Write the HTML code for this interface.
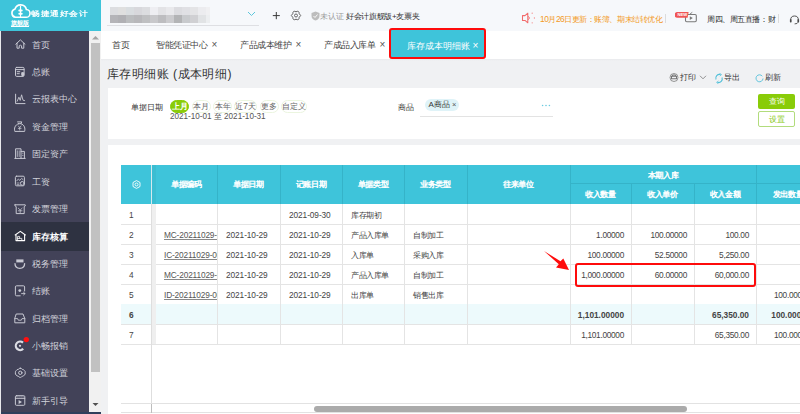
<!DOCTYPE html>
<html><head><meta charset="utf-8">
<style>
*{margin:0;padding:0;box-sizing:border-box}
html,body{width:800px;height:414px;overflow:hidden}
body{position:relative;background:#f0f1f3;font-family:"Liberation Sans",sans-serif;color:#333}
.a{position:absolute}
.nw{white-space:nowrap}
#logo{left:0;top:0;width:101px;height:31px;background:#3ec4da}
#side{left:0;top:31px;width:89px;height:383px;background:#424258;border-left:1px solid #e8e8ec;overflow:hidden}
.mi{position:absolute;left:0;width:88px;height:27.4px;color:#d2d3db;font-size:9px;line-height:27.4px}
.mi span{position:absolute;left:30.8px;top:0.5px}
.mi svg{position:absolute;left:14px;top:8.7px}
.mi.sel{background:#2e3241;color:#fff;font-weight:bold}
#vs{left:89px;top:31px;width:12px;height:381px;background:#f1f1f1}
#vthumb{left:91px;top:43px;width:9px;height:329px;background:#c1c1c1}
#hdr{left:101px;top:0;width:699px;height:31px;background:#f6f8fb}
#tabs{left:101px;top:31px;width:699px;height:28px;background:#fff;border-bottom:1px solid #fff}
#tabshadow{left:101px;top:59px;width:699px;height:2px;background:linear-gradient(#e9eaed,#f0f1f3)}
.tab{position:absolute;top:0;height:27px;line-height:28px;font-size:9px;letter-spacing:-0.5px;color:#444;white-space:nowrap}
.panel{background:#fff}
.hl{font-size:8.6px;color:#333;white-space:nowrap}
.pill{position:absolute;top:100px;height:13px;border-radius:7px;border:1px solid #ebf5df;font-size:8.4px;line-height:11.5px;text-align:center;color:#666;white-space:nowrap}
.th{color:#fff;font-weight:bold;text-shadow:0.3px 0 0 rgba(255,255,255,0.55);font-size:8.2px;letter-spacing:-0.4px;text-align:center;white-space:nowrap;overflow:hidden}
.td{height:20px;line-height:22px;font-size:8.3px;color:#444;white-space:nowrap}
</style></head>
<body>
<!-- LOGO -->
<div id="logo" class="a">
  <svg class="a" style="left:10px;top:4px" width="21" height="15" viewBox="0 0 21 15">
    <path d="M5.5 13.3 H15.8 a3.9 3.9 0 0 0 0.6 -7.8 a5.9 5.9 0 0 0 -11.4 -0.4 a4.2 4.2 0 0 0 0.5 8.2z" fill="none" stroke="#fff" stroke-width="1.6"/>
    <path d="M10.5 2 V13.5" stroke="#fff" stroke-width="1.2"/>
    <rect x="8.3" y="5.5" width="4.4" height="2" rx="1" fill="#fff"/>
    <rect x="8.3" y="8.7" width="4.4" height="2" rx="1" fill="#fff"/>
  </svg>
  <div class="a nw" style="left:31px;top:7.5px;font-size:9px;line-height:11px;color:#fff;letter-spacing:0.55px;font-weight:bold;transform:scaleY(0.8);transform-origin:0 50%">畅捷通好会计</div>
  <div class="a nw" style="left:11px;top:19px;font-size:6.3px;line-height:8px;color:#fff;font-weight:bold;text-decoration:underline">旗舰版</div>
</div>
<!-- SIDEBAR -->
<div id="side" class="a">
  <div class="mi" style="top:0"><span>首页</span></div>
  <div class="mi" style="top:27.4px"><span>总账</span></div>
  <div class="mi" style="top:54.8px"><span>云报表中心</span></div>
  <div class="mi" style="top:82.2px"><span>资金管理</span></div>
  <div class="mi" style="top:109.6px"><span>固定资产</span></div>
  <div class="mi" style="top:137px"><span>工资</span></div>
  <div class="mi" style="top:164.4px"><span>发票管理</span></div>
  <div class="mi sel" style="top:191.2px;height:28.4px;line-height:28.4px"><span>库存核算</span></div>
  <div class="mi" style="top:219.2px"><span>税务管理</span></div>
  <div class="mi" style="top:246.6px"><span>结账</span></div>
  <div class="mi" style="top:274px"><span>归档管理</span></div>
  <div class="mi" style="top:301.4px"><span>小畅报销</span></div>
  <div class="mi" style="top:328.8px"><span>基础设置</span></div>
  <div class="mi" style="top:356.2px"><span>新手引导</span></div>
</div>
<svg class="a" style="left:0;top:0" width="89" height="414" viewBox="0 0 89 414" fill="none" stroke="#c8c9d3" stroke-width="1" stroke-linejoin="round" stroke-linecap="round">
<path d="M15.8 44.2 L20.4 39.9 L25 44.2 M17 43.2 V48.2 H19.2 V45.8 Q20.4 44.6 21.6 45.8 V48.2 H23.8 V43.2"/>
<rect x="15.5" y="67.4" width="8.6" height="9" rx="1.2"/><path d="M15.5 69.6 H24.1 M17.2 71.7 H19.8 M17.2 73.7 H19.3"/><path d="M21.2 72.6 L22.7 72 L24.2 72.6 V74.6 Q24.2 76.2 22.7 76.8 Q21.2 76.2 21.2 74.6z" fill="#c8c9d3" stroke="none"/>
<path d="M15.6 94.2 V103.6 H25"/><path d="M17.2 101.2 L18.9 97.2 L20.2 100.4 L21.6 94.8 L23 100.2 L24.6 100.6" stroke-width="0.9"/>
<path d="M17.6 121.9 H21.8 L20.8 123.7 M18.6 123.7 H20.8 C24.6 124.8 25.4 128.5 24.6 131.4 H14.8 C14 128.5 14.8 124.8 18.6 123.7z"/><path d="M18.4 126 L19.7 127.6 L21 126 M19.7 127.6 V130 M18.3 128.4 H21.1" stroke-width="0.75"/>
<path d="M15.6 158.4 V148.8 H21 V158.4 M21 151.4 H24.4 V158.4 M14.8 158.4 H25.2"/><path d="M17.3 150.8 V156.5 M19.2 150.8 V156.5 M22.6 153.2 H23 M22.6 155.4 H23" stroke-width="0.8"/>
<rect x="15.4" y="176.2" width="9" height="9.6" rx="1.2"/><path d="M16.8 180.8 L18.4 179 L19.8 180.4 L21.6 178.4 L23 179.6" stroke-width="0.85"/><circle cx="22.3" cy="183.4" r="1.9" fill="#424258"/><path d="M17 183 H19 M17 184.6 H19" stroke-width="0.7"/>
<path d="M15 204.8 H25.2 Q26 206 24.2 206.6 V213.6 H16.2 V206.6 Q14.2 206 15 204.8z"/><path d="M18.3 208.2 L20.2 210 L22.1 208.2 M20.2 210 V212.6 M18.4 210.8 H22" stroke-width="0.75"/>
<path d="M15.2 235 L20.3 231.4 L25.4 235 M16 234.6 V240.6 H24.6 V234.6" stroke="#fff" stroke-width="1.1"/><path d="M17.6 240.6 V236.4 H19.6 V238.4 H21.8 V240.6 M17.6 238.4 H19.6" stroke="#fff" stroke-width="0.8"/>
<path d="M16.3 259.4 H23.5 V262.4 H16.3z" fill="#c8c9d3" stroke="none"/><path d="M15 263.6 Q15 268.4 19.8 268.4 Q24.6 268.4 24.6 263.6" stroke-width="1.3"/>
<path d="M24.6 291 V287 Q24.6 285.8 23.4 285.8 H16.6 Q15.4 285.8 15.4 287 V294.6 Q15.4 295.8 16.6 295.8 H20.2"/><circle cx="19.8" cy="290.6" r="1.4" fill="#c8c9d3" stroke="none"/><path d="M21.6 293.6 H25 M23.6 292.3 L25 293.6 L23.6 294.9" stroke-width="0.9"/>
<path d="M16.6 314 H23 L24.8 318.6 V322.8 H14.8 V318.6z"/><path d="M14.8 318.6 H17.6 L18.3 320.2 H21.3 L22 318.6 H24.8" stroke-width="0.9"/>
<path d="M23 342.6 A4.3 4.3 0 1 0 23.2 348.8" stroke="#dcdde4" stroke-width="2.2" stroke-linecap="butt"/><circle cx="20" cy="345.8" r="1.1" fill="#dcdde4" stroke="none"/>
<circle cx="26.3" cy="339.6" r="2.7" fill="#ff1010" stroke="none"/>
<path d="M20.3 368.2 Q21.6 368.2 22.3 369.4 Q23.7 369.3 24.4 370.6 Q25.6 371.6 25.2 372.8 Q25.6 374.1 24.4 375 Q23.7 376.3 22.3 376.2 Q21.6 377.4 20.3 377.4 Q19 377.4 18.3 376.2 Q16.9 376.3 16.2 375 Q15 374.1 15.4 372.8 Q15 371.6 16.2 370.6 Q16.9 369.3 18.3 369.4 Q19 368.2 20.3 368.2z"/><circle cx="20.3" cy="372.8" r="1.7"/>
<rect x="15.4" y="395.7" width="9.4" height="9.6" rx="1"/><path d="M15.4 398.4 H24.8" stroke-width="0.9"/><path d="M17 396.9 H17.2 M19 396.9 H19.2 M21 396.9 H21.2 M23 396.9 H23.2" stroke-width="0.8"/><path d="M18.6 400 V404 L22 402z" fill="#c8c9d3" stroke="none"/>
</svg>
<div id="vs" class="a"></div>
<div id="vthumb" class="a"></div>
<svg class="a" style="left:91px;top:34px" width="9" height="8" viewBox="0 0 9 8"><path d="M1 5.5 L4.5 2 L8 5.5z" fill="#a3a3a3"/></svg>
<svg class="a" style="left:91px;top:401px" width="9" height="8" viewBox="0 0 9 8"><path d="M1.5 2 L4.5 5 L7.5 2z" fill="#505050"/></svg>
<div class="a" style="left:1px;top:412px;width:100px;height:2px;background:#2f3f5c"></div>
<!-- HEADER -->
<div id="hdr" class="a">
  <div class="a" style="left:9px;top:7px;width:100px;height:16px;overflow:hidden;filter:blur(0.6px)">
    <svg width="100" height="16" viewBox="0 0 100 16" shape-rendering="crispEdges">
      <rect x="0" y="0" width="8" height="8" fill="#dcdde0"/><rect x="8" y="0" width="8" height="8" fill="#dfdfdf"/><rect x="16" y="0" width="8" height="8" fill="#d9dde0"/><rect x="24" y="0" width="8" height="8" fill="#d8d8dc"/><rect x="32" y="0" width="8" height="8" fill="#dcdde0"/><rect x="40" y="0" width="8" height="8" fill="#eeeef2"/><rect x="48" y="0" width="8" height="8" fill="#e3e3e6"/><rect x="56" y="0" width="8" height="8" fill="#e9e9ec"/><rect x="64" y="0" width="8" height="8" fill="#dcdce0"/><rect x="72" y="0" width="8" height="8" fill="#e0e0e4"/><rect x="80" y="0" width="8" height="8" fill="#e4e4e6"/><rect x="88" y="0" width="8" height="8" fill="#ececef"/><rect x="96" y="0" width="4" height="8" fill="#f0f0f2"/>
      <rect x="0" y="8" width="8" height="8" fill="#b4b4b8"/><rect x="8" y="8" width="8" height="8" fill="#b0b0b4"/><rect x="16" y="8" width="8" height="8" fill="#bbbdbf"/><rect x="24" y="8" width="8" height="8" fill="#b8b8bb"/><rect x="32" y="8" width="8" height="8" fill="#bfc0c2"/><rect x="40" y="8" width="8" height="8" fill="#c8c8cb"/><rect x="48" y="8" width="8" height="8" fill="#bdbdc0"/><rect x="56" y="8" width="8" height="8" fill="#cbcbce"/><rect x="64" y="8" width="8" height="8" fill="#b3b4b6"/><rect x="72" y="8" width="8" height="8" fill="#c8cacd"/><rect x="80" y="8" width="8" height="8" fill="#d0d0d3"/><rect x="88" y="8" width="8" height="8" fill="#e1e3e5"/><rect x="96" y="8" width="4" height="8" fill="#eceef0"/>
    </svg>
  </div>
  <div class="a" style="left:6px;top:25px;width:152px;height:1px;background:#dedfe3"></div>
  <svg class="a" style="left:146px;top:11px" width="9" height="6" viewBox="0 0 9 6"><path d="M1 1 L4.5 4.5 L8 1" fill="none" stroke="#5cc6dc" stroke-width="1"/></svg>
  <svg class="a" style="left:170.5px;top:10.5px" width="9" height="9" viewBox="0 0 9 9"><path d="M4.3 1V8.2M0.8 4.6H7.8" stroke="#3a3a3a" stroke-width="1"/></svg>
  <svg class="a" style="left:188.5px;top:9.5px" width="12" height="11" viewBox="0 0 12 11"><path d="M9.20 3.65 Q9.10 0.13 6.00 1.80 Q2.90 0.13 2.80 3.65 Q-0.20 5.50 2.80 7.35 Q2.90 10.87 6.00 9.20 Q9.10 10.87 9.20 7.35 Q12.20 5.50 9.20 3.65 z" fill="none" stroke="#5a5a5a" stroke-width="0.95"/><circle cx="6" cy="5.5" r="1.5" fill="none" stroke="#5a5a5a" stroke-width="0.9"/></svg>
  <svg class="a" style="left:210px;top:11px" width="9" height="10" viewBox="0 0 9 10"><path d="M4.5 0.5 L8.5 2 V5 C8.5 7.5 6.5 9 4.5 9.5 C2.5 9 0.5 7.5 0.5 5 V2z" fill="#bdbdbd"/><path d="M2.5 5 L4 6.5 L6.5 3.5" fill="none" stroke="#fff" stroke-width="0.9"/></svg>
  <div class="a nw" style="left:219px;top:10.5px;font-size:8.4px;line-height:11px;color:#9a9a9a">未认证</div>
  <div class="a nw" style="left:245px;top:10.5px;font-size:8.1px;letter-spacing:-0.33px;line-height:11px;color:#333">好会计旗舰版+友票夹</div>
  <svg class="a" style="left:420px;top:11px" width="15" height="14" viewBox="0 0 15 14"><path d="M1.5 4.6 H4 L6.8 2.2 V11.8 L4 9.4 H1.5z" fill="none" stroke="#f26b6b" stroke-width="1.05" stroke-linejoin="round"/><path d="M7.4 5.3 Q9.4 7 7.4 8.7" fill="none" stroke="#f26b6b" stroke-width="1"/><circle cx="11.2" cy="2.2" r="0.65" fill="#f58a8a"/><circle cx="13.4" cy="7" r="0.65" fill="#f58a8a"/><circle cx="11.2" cy="11.8" r="0.65" fill="#f58a8a"/></svg>
  <div class="a nw" style="left:439px;top:14px;font-size:8.4px;letter-spacing:-0.47px;line-height:11px;color:#f39a1e">10月26日更新：账簿、期末结转优化</div>
  <div class="a" style="left:564px;top:14px;width:1px;height:9px;background:#dcdcdc"></div>
  <svg class="a" style="left:574px;top:11px" width="23" height="13" viewBox="0 0 23 13"><rect x="10.5" y="3.5" width="10.8" height="7.2" rx="1.2" fill="none" stroke="#7a7a7a" stroke-width="1.1"/><path d="M15 3 L17.3 1.3" fill="none" stroke="#7a7a7a" stroke-width="0.9"/><path d="M14.8 5.3 V8.9 L17.8 7.1z" fill="#7a7a7a"/><path d="M2.5 1 H13.6 L12.6 6.8 H2.5 A2.9 2.9 0 0 1 2.5 1z" fill="#f05555"/><text x="7.4" y="5.4" font-size="4.2" fill="#fff" text-anchor="middle" font-family="Liberation Sans" font-weight="bold">NEW</text></svg>
  <div class="a nw" style="left:606px;top:14px;font-size:8.4px;letter-spacing:-0.42px;line-height:11px;color:#333">周四、周五直播：财</div>
  <div class="a" style="left:677px;top:14px;width:1px;height:9px;background:#dcdcdc"></div>
  <svg class="a" style="left:687.5px;top:13.5px" width="11" height="11" viewBox="0 0 11 11"><path d="M1.6 6.2 A3.9 4.2 0 0 1 9.4 6.2" fill="none" stroke="#4a4a4a" stroke-width="0.95"/><rect x="0.9" y="5.2" width="1.7" height="3.2" rx="0.6" fill="#4a4a4a"/><rect x="8.4" y="5.2" width="1.7" height="3.2" rx="0.6" fill="#4a4a4a"/><path d="M9 8.3 Q8.6 9.9 5.6 9.9" fill="none" stroke="#4a4a4a" stroke-width="0.9"/></svg>
</div>
<!-- TABS -->
<div id="tabshadow" class="a"></div>
<div id="tabs" class="a">
  <div class="tab" style="left:11px">首页</div>
  <div class="tab" style="left:55px">智能凭证中心 <span style="font-size:10px;font-weight:lighter;color:#555;margin-left:2.5px;letter-spacing:0">×</span></div>
  <div class="tab" style="left:139px">产品成本维护 <span style="font-size:10px;font-weight:lighter;color:#555;margin-left:2.5px;letter-spacing:0">×</span></div>
  <div class="tab" style="left:223px">产成品入库单 <span style="font-size:10px;font-weight:lighter;color:#555;margin-left:2.5px;letter-spacing:0">×</span></div>
</div>
<div class="a" style="left:389px;top:28px;width:97px;height:31px;border:2px solid #fe0b0b;border-radius:3px;background:#3ec4da"></div>
<div class="a nw" style="left:407px;top:40px;font-size:8.6px;line-height:11px;color:#fff">库存成本明细账 <span style="font-size:10px">×</span></div>
<!-- TITLE -->
<div class="a nw" style="left:107px;top:66.5px;font-size:12.2px;line-height:15px;color:#333;letter-spacing:0.45px">库存明细账 (成本明细)</div>
<!-- TOOLBAR -->
<svg class="a" style="left:669px;top:73px" width="10" height="9" viewBox="0 0 10 9"><circle cx="5" cy="4.5" r="4" fill="none" stroke="#8a8a8a" stroke-width="0.9"/><rect x="2.6" y="3.2" width="4.8" height="2.6" fill="none" stroke="#555" stroke-width="0.8"/><path d="M3.6 3.2V2H6.4V3.2" fill="none" stroke="#555" stroke-width="0.7"/></svg>
<div class="a nw" style="left:680px;top:72px;font-size:8.4px;line-height:11px;color:#333">打印</div>
<svg class="a" style="left:699px;top:75px" width="8" height="5" viewBox="0 0 8 5"><path d="M1 0.8 L4 3.8 L7 0.8" fill="none" stroke="#777" stroke-width="0.8"/></svg>
<svg class="a" style="left:714px;top:72.5px" width="10" height="11" viewBox="0 0 10 11"><path d="M6.5 1.5 A3.8 3.8 0 0 0 2 6.5" fill="none" stroke="#52c0d9" stroke-width="1.1"/><path d="M3.5 9.5 A3.8 3.8 0 0 0 8 4.5" fill="none" stroke="#52c0d9" stroke-width="1.1"/><path d="M5.5 0.3 L7.5 1.6 L5.8 3" fill="none" stroke="#52c0d9" stroke-width="0.8"/><path d="M4.5 8 L2.6 9.4 L4.2 10.7" fill="none" stroke="#52c0d9" stroke-width="0.8"/></svg>
<div class="a nw" style="left:724px;top:72px;font-size:8.4px;line-height:11px;color:#333">导出</div>
<svg class="a" style="left:754.5px;top:73.5px" width="9" height="9" viewBox="0 0 9 9"><path d="M7.3 2.2 A3.5 3.5 0 1 0 8 4.5" fill="none" stroke="#52c0d9" stroke-width="0.9"/></svg>
<div class="a nw" style="left:765px;top:72px;font-size:8.4px;line-height:11px;color:#333">刷新</div>
<!-- PANEL 1 -->
<div class="a panel" style="left:107.5px;top:88px;width:693px;height:51px"></div>
<div class="a hl" style="left:131px;top:101.5px;line-height:11px;font-size:8.1px">单据日期</div>
<div class="pill" style="left:170px;width:19px;background:#89cc08;border-color:#89cc08;color:#fff;font-weight:bold">上月</div>
<div class="pill" style="left:191.5px;width:19.5px">本月</div>
<div class="pill" style="left:213px;width:19px">本年</div>
<div class="pill" style="left:234px;width:23px">近7天</div>
<div class="pill" style="left:259.5px;width:19.5px">更多</div>
<div class="pill" style="left:281px;width:26px">自定义</div>
<div class="a hl" style="left:170px;top:111px;line-height:11px;color:#555;font-size:8.15px">2021-10-01 至 2021-10-31</div>
<div class="a hl" style="left:397.5px;top:101.5px;line-height:11px;font-size:8px">商品</div>
<div class="a nw" style="left:425px;top:99px;width:34px;height:12px;border-radius:6px;background:#dff3f8;font-size:8px;line-height:12px;color:#333;padding-left:3.5px">A商品 <span style="font-size:7.5px;color:#555">×</span></div>
<div class="a" style="left:420px;top:116px;width:133px;height:1px;background:#e3e3e3"></div>
<svg class="a" style="left:541px;top:104px" width="10" height="3" viewBox="0 0 10 3"><circle cx="1.6" cy="1.5" r="0.8" fill="#6ccbe0"/><circle cx="5" cy="1.5" r="0.8" fill="#6ccbe0"/><circle cx="8.4" cy="1.5" r="0.8" fill="#6ccbe0"/></svg>
<div class="a nw" style="left:758px;top:94px;width:37px;height:14.5px;border-radius:2px;background:#89cc08;color:#fff;font-size:8.4px;line-height:14.5px;text-align:center">查询</div>
<div class="a nw" style="left:758px;top:111px;width:37px;height:16px;border-radius:2px;border:1px solid #b2dc7c;background:#fff;color:#84c80f;font-size:8.4px;line-height:14px;text-align:center">设置</div>
<!-- PANEL 2 -->
<div class="a panel" style="left:107.5px;top:145px;width:693px;height:269px"></div>
<!-- TABLE -->
<div class="a" style="left:121px;top:165px;width:679px;height:39px;background:#3ec4da"></div>
<svg class="a" style="left:131.5px;top:179.5px" width="9" height="9" viewBox="0 0 9 9"><path d="M4.5 0.6 L8 2.5 V6.5 L4.5 8.4 L1 6.5 V2.5z" fill="none" stroke="#fff" stroke-width="0.9"/><circle cx="4.5" cy="4.5" r="1.5" fill="none" stroke="#fff" stroke-width="0.9"/></svg>
<div class="a" style="left:151px;top:165px;width:1px;height:39px;background:#d6e9ee"></div>
<div class="a" style="left:152px;top:165px;width:4px;height:39px;background:#3bbdd2"></div>
<div class="a" style="left:217px;top:165px;width:1px;height:39px;background:#35b3c8"></div>
<div class="a" style="left:280px;top:165px;width:1px;height:39px;background:#35b3c8"></div>
<div class="a" style="left:342px;top:165px;width:1px;height:39px;background:#35b3c8"></div>
<div class="a" style="left:404px;top:165px;width:1px;height:39px;background:#35b3c8"></div>
<div class="a" style="left:467px;top:165px;width:1px;height:39px;background:#35b3c8"></div>
<div class="a" style="left:570px;top:165px;width:1px;height:39px;background:#35b3c8"></div>
<div class="a" style="left:756px;top:165px;width:1px;height:39px;background:#35b3c8"></div>
<div class="a" style="left:631px;top:183px;width:1px;height:21px;background:#35b3c8"></div>
<div class="a" style="left:694px;top:183px;width:1px;height:21px;background:#35b3c8"></div>
<div class="a" style="left:570px;top:183px;width:230px;height:1px;background:#35b3c8"></div>
<div class="a th" style="left:156px;top:165px;width:61px;height:39px;line-height:39px">单据编码</div>
<div class="a th" style="left:217px;top:165px;width:63px;height:39px;line-height:39px">单据日期</div>
<div class="a th" style="left:280px;top:165px;width:62px;height:39px;line-height:39px">记账日期</div>
<div class="a th" style="left:342px;top:165px;width:62px;height:39px;line-height:39px">单据类型</div>
<div class="a th" style="left:404px;top:165px;width:63px;height:39px;line-height:39px">业务类型</div>
<div class="a th" style="left:467px;top:165px;width:103px;height:39px;line-height:39px">往来单位</div>
<div class="a th" style="left:570px;top:168px;width:186px;height:15px;line-height:15px">本期入库</div>
<div class="a th" style="left:756px;top:168px;width:124px;height:15px;line-height:15px">本期发出</div>
<div class="a th" style="left:570px;top:184.5px;width:61px;height:20.0px;line-height:20.0px">收入数量</div>
<div class="a th" style="left:631px;top:184.5px;width:63px;height:20.0px;line-height:20.0px">收入单价</div>
<div class="a th" style="left:694px;top:184.5px;width:62px;height:20.0px;line-height:20.0px">收入金额</div>
<div class="a th" style="left:756px;top:184.5px;width:64px;height:20.0px;line-height:20.0px">发出数量</div>
<div class="a" style="left:121px;top:224px;width:679px;height:1px;background:#e4e4e4"></div>
<div class="a td" style="left:129px;top:204px;">1</div>
<div class="a td" style="left:289px;top:204px;letter-spacing:-0.08px">2021-09-30</div>
<div class="a td" style="left:351px;top:204px;letter-spacing:-0.4px">库存期初</div>
<div class="a" style="left:121px;top:244px;width:679px;height:1px;background:#e4e4e4"></div>
<div class="a td" style="left:129px;top:224px;">2</div>
<div class="a td" style="left:156px;top:224px;width:61px;overflow:hidden;padding-left:8px"><span style="text-decoration:underline;text-decoration-color:#888;color:#555;letter-spacing:-0.15px">MC-20211029-0001</span></div>
<div class="a td" style="left:226px;top:224px;letter-spacing:-0.08px">2021-10-29</div>
<div class="a td" style="left:289px;top:224px;letter-spacing:-0.08px">2021-10-29</div>
<div class="a td" style="left:351px;top:224px;letter-spacing:-0.4px">产品入库单</div>
<div class="a td" style="left:413px;top:224px;letter-spacing:-0.4px">自制加工</div>
<div class="a td" style="left:570px;top:224px;width:61px;text-align:right;padding-right:7px;letter-spacing:-0.3px;">1.00000</div>
<div class="a td" style="left:631px;top:224px;width:63px;text-align:right;padding-right:7px;letter-spacing:-0.3px;">100.00000</div>
<div class="a td" style="left:694px;top:224px;width:62px;text-align:right;padding-right:7px;letter-spacing:-0.3px;">100.00</div>
<div class="a" style="left:121px;top:264px;width:679px;height:1px;background:#e4e4e4"></div>
<div class="a td" style="left:129px;top:244px;">3</div>
<div class="a td" style="left:156px;top:244px;width:61px;overflow:hidden;padding-left:8px"><span style="text-decoration:underline;text-decoration-color:#888;color:#555;letter-spacing:-0.15px">IC-20211029-0001</span></div>
<div class="a td" style="left:226px;top:244px;letter-spacing:-0.08px">2021-10-29</div>
<div class="a td" style="left:289px;top:244px;letter-spacing:-0.08px">2021-10-29</div>
<div class="a td" style="left:351px;top:244px;letter-spacing:-0.4px">入库单</div>
<div class="a td" style="left:413px;top:244px;letter-spacing:-0.4px">采购入库</div>
<div class="a td" style="left:570px;top:244px;width:61px;text-align:right;padding-right:7px;letter-spacing:-0.3px;">100.00000</div>
<div class="a td" style="left:631px;top:244px;width:63px;text-align:right;padding-right:7px;letter-spacing:-0.3px;">52.50000</div>
<div class="a td" style="left:694px;top:244px;width:62px;text-align:right;padding-right:7px;letter-spacing:-0.3px;">5,250.00</div>
<div class="a" style="left:121px;top:284px;width:679px;height:1px;background:#e4e4e4"></div>
<div class="a td" style="left:129px;top:264px;">4</div>
<div class="a td" style="left:156px;top:264px;width:61px;overflow:hidden;padding-left:8px"><span style="text-decoration:underline;text-decoration-color:#888;color:#555;letter-spacing:-0.15px">MC-20211029-0002</span></div>
<div class="a td" style="left:226px;top:264px;letter-spacing:-0.08px">2021-10-29</div>
<div class="a td" style="left:289px;top:264px;letter-spacing:-0.08px">2021-10-29</div>
<div class="a td" style="left:351px;top:264px;letter-spacing:-0.4px">产品入库单</div>
<div class="a td" style="left:413px;top:264px;letter-spacing:-0.4px">自制加工</div>
<div class="a td" style="left:570px;top:264px;width:61px;text-align:right;padding-right:7px;letter-spacing:-0.3px;">1,000.00000</div>
<div class="a td" style="left:631px;top:264px;width:63px;text-align:right;padding-right:7px;letter-spacing:-0.3px;">60.00000</div>
<div class="a td" style="left:694px;top:264px;width:62px;text-align:right;padding-right:7px;letter-spacing:-0.3px;">60,000.00</div>
<div class="a" style="left:121px;top:304px;width:679px;height:1px;background:#e4e4e4"></div>
<div class="a td" style="left:129px;top:284px;">5</div>
<div class="a td" style="left:156px;top:284px;width:61px;overflow:hidden;padding-left:8px"><span style="text-decoration:underline;text-decoration-color:#888;color:#555;letter-spacing:-0.15px">ID-20211029-0001</span></div>
<div class="a td" style="left:226px;top:284px;letter-spacing:-0.08px">2021-10-29</div>
<div class="a td" style="left:289px;top:284px;letter-spacing:-0.08px">2021-10-29</div>
<div class="a td" style="left:351px;top:284px;letter-spacing:-0.4px">出库单</div>
<div class="a td" style="left:413px;top:284px;letter-spacing:-0.4px">销售出库</div>
<div class="a td" style="left:756px;top:284px;width:64px;text-align:right;padding-right:9.5px;letter-spacing:-0.3px;">100.00000</div>
<div class="a" style="left:121px;top:304px;width:679px;height:20px;background:#edfafc"></div>
<div class="a" style="left:121px;top:324px;width:679px;height:1px;background:#e4e4e4"></div>
<div class="a td" style="left:129px;top:304px; font-weight:bold;">6</div>
<div class="a td" style="left:570px;top:304px;width:61px;text-align:right;padding-right:7px;letter-spacing:0; font-weight:bold;">1,101.00000</div>
<div class="a td" style="left:694px;top:304px;width:62px;text-align:right;padding-right:7px;letter-spacing:0; font-weight:bold;">65,350.00</div>
<div class="a td" style="left:756px;top:304px;width:64px;text-align:right;padding-right:9.5px;letter-spacing:0; font-weight:bold;">100.00000</div>
<div class="a" style="left:121px;top:344px;width:679px;height:1px;background:#e4e4e4"></div>
<div class="a td" style="left:129px;top:324px;">7</div>
<div class="a td" style="left:570px;top:324px;width:61px;text-align:right;padding-right:7px;letter-spacing:-0.3px;">1,101.00000</div>
<div class="a td" style="left:694px;top:324px;width:62px;text-align:right;padding-right:7px;letter-spacing:-0.3px;">65,350.00</div>
<div class="a td" style="left:756px;top:324px;width:64px;text-align:right;padding-right:9.5px;letter-spacing:-0.3px;">100.00000</div>
<div class="a" style="left:217px;top:204px;width:1px;height:141px;background:#e4e4e4"></div>
<div class="a" style="left:280px;top:204px;width:1px;height:141px;background:#e4e4e4"></div>
<div class="a" style="left:342px;top:204px;width:1px;height:141px;background:#e4e4e4"></div>
<div class="a" style="left:404px;top:204px;width:1px;height:141px;background:#e4e4e4"></div>
<div class="a" style="left:467px;top:204px;width:1px;height:141px;background:#e4e4e4"></div>
<div class="a" style="left:570px;top:204px;width:1px;height:141px;background:#e4e4e4"></div>
<div class="a" style="left:631px;top:204px;width:1px;height:141px;background:#e4e4e4"></div>
<div class="a" style="left:694px;top:204px;width:1px;height:141px;background:#e4e4e4"></div>
<div class="a" style="left:756px;top:204px;width:1px;height:141px;background:#e4e4e4"></div>
<div class="a" style="left:151px;top:204px;width:1px;height:199px;background:#dedede"></div>
<div class="a" style="left:152px;top:204px;width:4px;height:140px;background:#efefef"></div>
<div class="a" style="left:121px;top:403px;width:679px;height:1px;background:#e2e2e2"></div>
<div class="a" style="left:121px;top:412px;width:679px;height:1px;background:#e2e2e2"></div>
<div class="a" style="left:151px;top:404px;width:1px;height:9px;background:#bdbdbd"></div>
<div class="a" style="left:314px;top:406px;width:373px;height:6px;border-radius:3px;background:#ababab"></div>
<div class="a" style="left:574.5px;top:263px;width:181px;height:24px;border:2px solid #fe0b0b;border-radius:3px"></div>
<svg class="a" style="left:540px;top:248px" width="32" height="25" viewBox="540 248 32 25"><path d="M544 251 L560.5 261.3 L563.3 258.5 L569 270 L556 267.5 L558.8 264.2z" fill="#fe0b0b"/></svg>
</body></html>
